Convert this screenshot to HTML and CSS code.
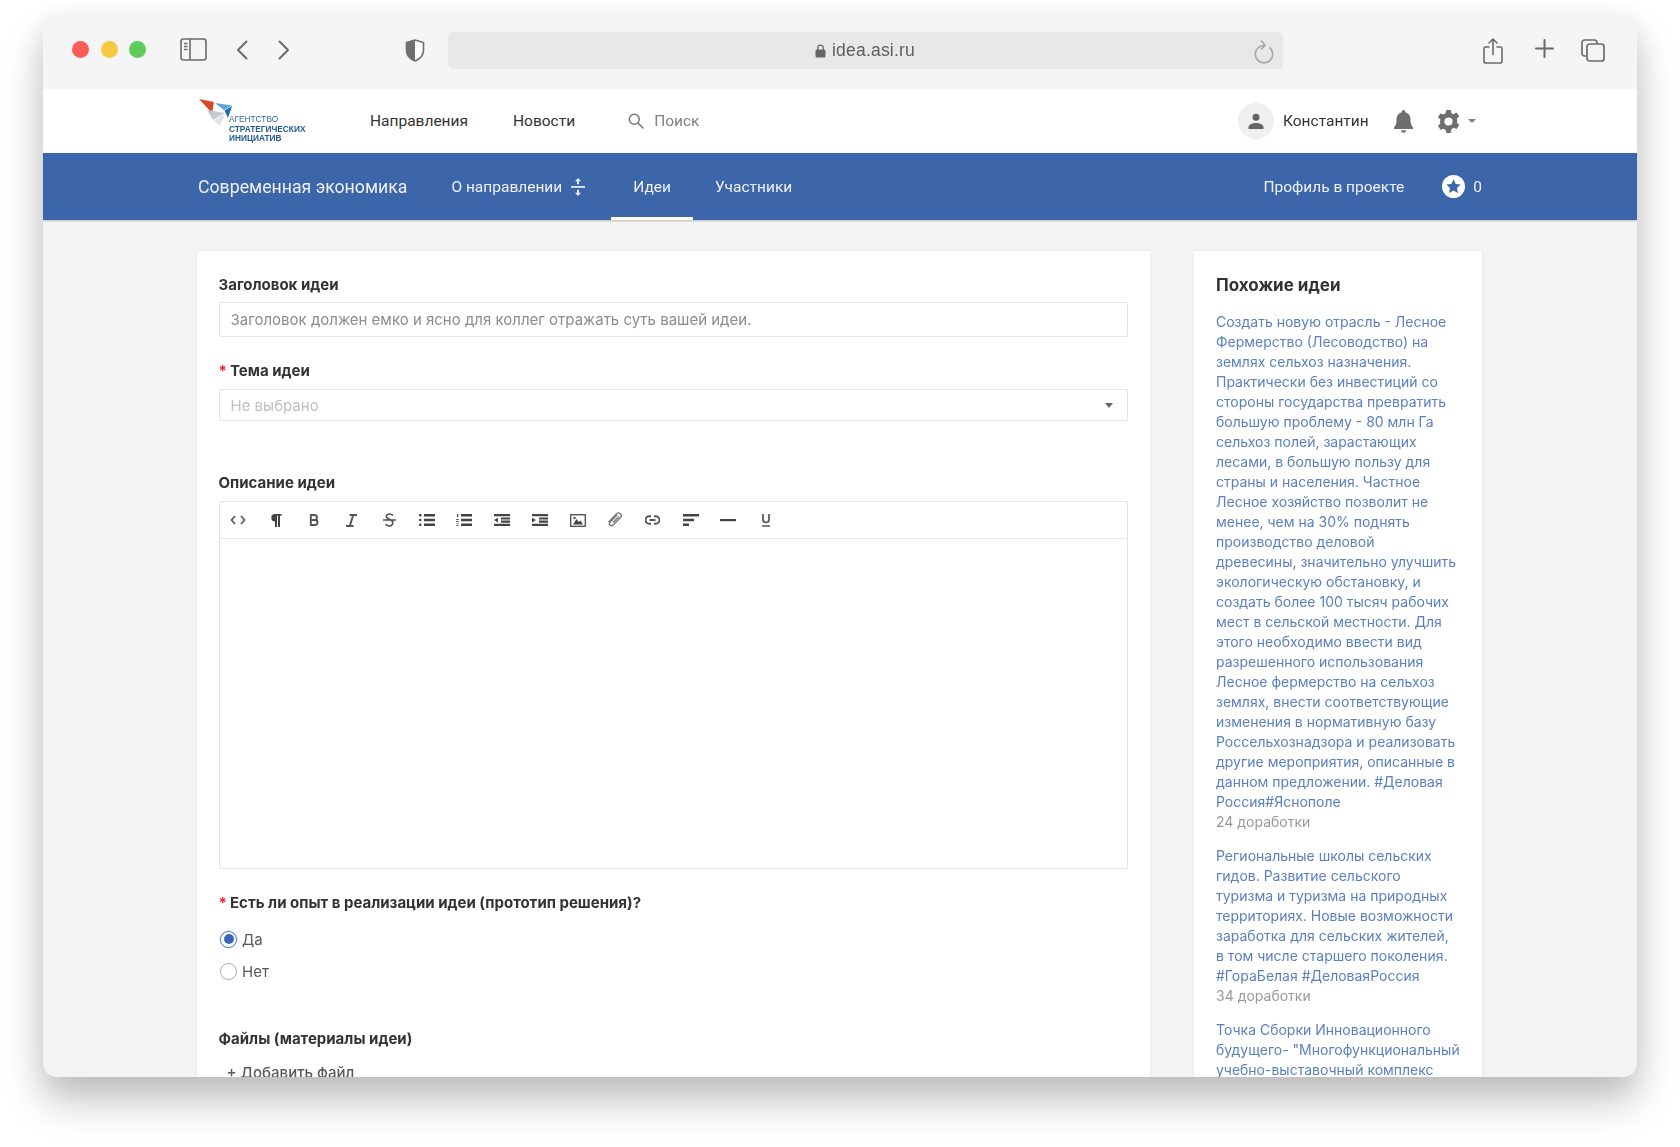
FILE: index.html
```html
<!DOCTYPE html>
<html lang="ru">
<head>
<meta charset="utf-8">
<title>idea.asi.ru</title>
<link rel="stylesheet" href="styles.css">
</head>
<body>
<div class="window">
  <header class="chrome">
    <div class="lights"><i class="light red"></i><i class="light yellow"></i><i class="light green"></i></div>
    <svg class="c-sidebar" width="27" height="23" viewBox="0 0 27 23" fill="none" stroke="#6b6b6b" stroke-width="1.6"><rect x="1" y="1" width="25" height="21" rx="2.5"/><path d="M10 1v21"/><path d="M4 5.500h3.500M4 8.500h3.500M4 11.500h3.500" stroke-width="1.300"/></svg>
    <svg class="c-back" width="12" height="20" viewBox="0 0 12 20" fill="none" stroke="#6b6b6b" stroke-width="2" stroke-linecap="round" stroke-linejoin="round"><path d="M10.500 1.500 2 10l8.500 8.500"/></svg>
    <svg class="c-forward" width="12" height="20" viewBox="0 0 12 20" fill="none" stroke="#6b6b6b" stroke-width="2" stroke-linecap="round" stroke-linejoin="round"><path d="M1.500 1.500 10 10l-8.500 8.500"/></svg>
    <svg class="c-shield" width="20" height="23" viewBox="0 0 20 23"><path d="M10 1 1.500 3.500V11c0 5 3.500 9 8.500 11 5-2 8.500-6 8.500-11V3.500z" fill="#fff" stroke="#6f6f6f" stroke-width="1.600"/><path d="M10 1 1.500 3.500V11c0 5 3.500 9 8.500 11z" fill="#6f6f6f"/></svg>
    <div class="url">
      <div class="url-text">
        <svg width="11" height="14" viewBox="0 0 11 14"><rect x="0.500" y="5.500" width="10" height="8" rx="1.500" fill="#666"/><path d="M2.800 6V3.800a2.700 2.700 0 0 1 5.400 0V6" fill="none" stroke="#666" stroke-width="1.300"/></svg>
        <span>idea.asi.ru</span>
      </div>
      <svg class="c-reload" width="21" height="24" viewBox="0 0 21 24" fill="none" stroke="#a6a6a6" stroke-width="1.600" stroke-linecap="round" stroke-linejoin="round"><path d="M11 5.500a8.700 8.700 0 1 0 8.700 8.700c0-2.600-1-4.700-2.800-6.300"/><path d="M8.500 1 12 5.200 8.500 9"/></svg>
    </div>
    <div class="chrome-right">
      <svg width="20" height="26" viewBox="0 0 20 26" fill="none" stroke="#6b6b6b" stroke-width="1.600" stroke-linecap="round" stroke-linejoin="round"><path d="M6 9H2.500A1.500 1.500 0 0 0 1 10.500v13A1.500 1.500 0 0 0 2.500 25h15a1.500 1.500 0 0 0 1.500-1.500v-13A1.500 1.500 0 0 0 17.500 9H14"/><path d="M10 16.500V1.500M6 5l4-4 4 4"/></svg>
      <svg width="19" height="19" viewBox="0 0 19 19" fill="none" stroke="#6b6b6b" stroke-width="2" stroke-linecap="round"><path d="M9.500 1v17M1 9.500h17"/></svg>
      <svg width="24" height="23" viewBox="0 0 24 23" fill="none" stroke="#6b6b6b" stroke-width="1.700"><path d="M5 17H3.500A2.500 2.500 0 0 1 1 14.500v-11A2.500 2.500 0 0 1 3.500 1h10A2.500 2.500 0 0 1 16 3.500V5"/><rect x="6" y="5" width="17" height="17" rx="2.500"/></svg>
    </div>
  </header>

  <div class="page">
    <nav class="topnav">
      <a class="logo">
        <svg class="logo-mark" width="36" height="30" viewBox="0 0 36 30"><path d="M0 0 15 3 13 14z" fill="#d9472b"/><path d="M16 4 33 6.500 25 11z" fill="#57a5dc"/><path d="M33 7 29 19 25.500 11.500z" fill="#1f6fb0"/><path d="M8 11 26 14 14 21z" fill="#c4c9ce"/><path d="M26 15 21 27 15 21.500z" fill="#dfe2e5"/></svg>
        <span class="logo-text"><span class="logo-thin">АГЕНТСТВО</span><b>СТРАТЕГИЧЕСКИХ</b><b>ИНИЦИАТИВ</b></span>
      </a>
      <a class="topnav-link first">Направления</a>
      <a class="topnav-link second">Новости</a>
      <div class="search">
        <svg width="16" height="16" viewBox="0 0 16 16" fill="none" stroke="#777" stroke-width="1.500" stroke-linecap="round"><circle cx="6.300" cy="6.300" r="5"/><path d="m10 10 5 5"/></svg>
        <span>Поиск</span>
      </div>
      <div class="user">
        <span class="avatar"><svg width="16" height="16" viewBox="0 0 16 16" fill="#666"><circle cx="8" cy="4.200" r="3.500"/><path d="M0.500 16v-1.500c0-3 3.500-4.500 7.500-4.500s7.500 1.500 7.500 4.500V16z"/></svg></span>
        <span class="user-name">Константин</span>
        <svg class="bell" width="19" height="23" viewBox="0 0 19 23" fill="#6e6e6e"><path d="M9.500 0a1.700 1.700 0 0 1 1.700 1.700v.6c3.300.8 5.300 3.700 5.300 7.200 0 4.800 1.100 6.200 2.500 8v1.500H0V17.500c1.400-1.800 2.500-3.200 2.500-8 0-3.500 2-6.400 5.300-7.200v-.6A1.700 1.700 0 0 1 9.500 0z"/><path d="M7 20.300h5a2.500 2.500 0 0 1-5 0z"/></svg>
        <svg class="gear" width="23" height="23" viewBox="0 0 24 24" fill="#6e6e6e"><path fill-rule="evenodd" d="M9.700 0h4.600l.7 3.300c.8.300 1.500.6 2.200 1.100l3-1.700 3 3.900-2.500 2.300c.2.700.3 1.400.3 2.100s-.1 1.400-.3 2.100l2.500 2.300-2.600 4.300-3.200-1.200c-.7.500-1.400.9-2.200 1.200L14.300 24H9.700L9 20.700c-.8-.3-1.500-.7-2.200-1.200l-3.200 1.200L1 16.400l2.500-2.300c-.2-.7-.3-1.400-.3-2.100s.1-1.400.3-2.100L1 7.600l2.600-3.900 3.200 1C7.500 4.200 8.200 3.800 9 3.500zM12 7.700a4.300 4.300 0 1 0 0 8.600 4.300 4.300 0 0 0 0-8.600z"/></svg>
        <i class="caret"></i>
      </div>
    </nav>

    <nav class="subnav">
      <span class="subnav-title">Современная экономика</span>
      <a class="subnav-link about">О направлении
        <svg width="14" height="18" viewBox="0 0 14 18" fill="#e4eaf4"><path d="M0 8h14v1.800H0z"/><path d="M7 0l3 3.200H8v3H6v-3H4zM7 18l3-3.200H8v-3H6v3H4z"/></svg>
      </a>
      <a class="subnav-tab active">Идеи</a>
      <a class="subnav-tab">Участники</a>
      <div class="subnav-right">
        <a class="subnav-link">Профиль в проекте</a>
        <svg class="star" width="23" height="23" viewBox="0 0 23 23"><circle cx="11.500" cy="11.500" r="11.500" fill="#fff"/><path d="m11.500 4.300 2.200 4.600 5 .6-3.700 3.400 1 5-4.500-2.500L7 18l1-5-3.700-3.400 5-.6z" fill="#3d65a9"/></svg>
        <span class="score">0</span>
      </div>
    </nav>

    <main class="content">
      <section class="card form">
        <div class="label">Заголовок идеи</div>
        <div class="input">Заголовок должен емко и ясно для коллег отражать суть вашей идеи.</div>

        <div class="label required theme-label"><em>*</em>Тема идеи</div>
        <div class="input select"><span>Не выбрано</span><i class="select-caret"></i></div>

        <div class="label desc-label">Описание идеи</div>
        <div class="editor">
          <div class="tools">
            <span class="tool"><svg width="16" height="12" viewBox="0 0 16 12" fill="none" stroke="#555" stroke-width="1.700"><path d="M5 2 1.500 6 5 10M11 2l3.500 4L11 10"/></svg></span>
            <span class="tool"><svg width="12" height="14" viewBox="0 0 12 14" fill="#444"><path d="M5 1h6.500v1.800H10V14H8V2.800H7V14H5V8.400A3.700 3.700 0 0 1 5 1z"/></svg></span>
            <span class="tool"><svg width="10" height="12" viewBox="0 0 10 12" fill="none" stroke="#555" stroke-width="1.900"><path d="M1.800 1v10M1 1h4.500a2.400 2.400 0 0 1 0 5H1.800h4.200a2.500 2.500 0 0 1 0 5H1"/></svg></span>
            <span class="tool"><svg width="11" height="13" viewBox="0 0 11 13" fill="none" stroke="#555" stroke-width="1.900"><path d="M3.500 1H11M0 12h7.500M7.200 1 3.800 12"/></svg></span>
            <span class="tool"><svg width="13" height="14" viewBox="0 0 13 14" fill="none" stroke="#555" stroke-width="1.700"><path d="M10 2.500C9 1.200 7.800 1 6.500 1 4.800 1 3.300 2 3.300 3.600c0 1.500 1.400 2.200 3.200 2.800 2 .7 3.300 1.500 3.300 3.300 0 1.800-1.600 3.300-3.500 3.300-1.500 0-2.800-.5-3.800-1.800M0 7h13"/></svg></span>
            <span class="tool"><svg width="16" height="12" viewBox="0 0 16 12" fill="#444"><path d="M5 0h11v2.400H5zM5 4.800h11v2.400H5zM5 9.600h11V12H5z"/><circle cx="1.300" cy="1.200" r="1.300"/><circle cx="1.300" cy="6" r="1.300"/><circle cx="1.300" cy="10.800" r="1.300"/></svg></span>
            <span class="tool"><svg width="16" height="12" viewBox="0 0 16 12" fill="#444"><path d="M5 0h11v2.400H5zM5 4.800h11v2.400H5zM5 9.600h11V12H5zM1 0h1.200v3H1zM.3 5h2.400v1H.3zM.3 7h2.400v1H.3zM.3 9.500h2.400v.8H.3zM.3 11.200h2.400v.8H.3z"/></svg></span>
            <span class="tool"><svg width="16" height="12" viewBox="0 0 16 12" fill="#444"><path d="M0 0h16v2.200H0zM7 3.400h9v2.200H7zM7 6.600h9v2.200H7zM0 9.800h16V12H0zM4 3.800v4.600L0 6.100z"/></svg></span>
            <span class="tool"><svg width="16" height="12" viewBox="0 0 16 12" fill="#444"><path d="M0 0h16v2.200H0zM7 3.400h9v2.200H7zM7 6.600h9v2.200H7zM0 9.800h16V12H0zM0 3.800v4.600l4-2.300z"/></svg></span>
            <span class="tool"><svg width="16" height="13" viewBox="0 0 16 13"><rect x=".7" y=".7" width="14.600" height="11.600" fill="none" stroke="#555" stroke-width="1.400"/><path d="M3 10.500 6.500 5l2.300 3 1.700-1.500 2.500 4z" fill="#444"/><circle cx="4.500" cy="4" r="1.200" fill="#444"/></svg></span>
            <span class="tool"><svg width="16" height="16" viewBox="0 0 16 16" fill="none" stroke="#7d7d7d" stroke-width="1.500" stroke-linecap="round"><path d="M9.600 3.500 3.200 10c-1 1-1 2.300-.2 3.100.8.800 2.200.8 3.100-.1l7.200-7.300c1.300-1.300 1.300-3 .3-4-1-1-2.800-1-4 .2L2 9.500M6.500 10l5-5"/></svg></span>
            <span class="tool"><svg width="15" height="10" viewBox="0 0 15 10" fill="none" stroke="#555" stroke-width="1.900"><path d="M6 1.200H4.300a3.800 3.800 0 0 0 0 7.600H6M9 1.200h1.700a3.800 3.800 0 0 1 0 7.600H9M4.500 5h6"/></svg></span>
            <span class="tool"><svg width="16" height="12" viewBox="0 0 16 12" fill="#444"><path d="M0 0h16v2.400H0zM0 4.800h11v2.400H0zM0 9.600h6V12H0z"/></svg></span>
            <span class="tool"><svg width="16" height="3" viewBox="0 0 16 3" fill="#444"><path d="M0 0h16v2.200H0z"/></svg></span>
            <span class="tool"><svg width="10" height="13" viewBox="0 0 10 13" fill="none" stroke="#555" stroke-width="1.700"><path d="M2 0v5.500a3 3 0 0 0 6 0V0M1 12h8"/></svg></span>
          </div>
          <div class="editor-body"></div>
        </div>

        <div class="label required question-label"><em>*</em>Есть ли опыт в реализации идеи (прототип решения)?</div>
        <label class="radio first-radio"><i class="dot checked"></i><span>Да</span></label>
        <label class="radio"><i class="dot"></i><span>Нет</span></label>

        <div class="label files-label">Файлы (материалы идеи)</div>
        <div class="add-file">+ Добавить файл</div>
      </section>

      <aside class="card side">
        <h3>Похожие идеи</h3>
        <div class="idea">
          <a>Создать новую отрасль - Лесное Фермерство (Лесоводство) на землях сельхоз назначения. Практически без инвестиций со стороны государства превратить большую проблему - 80 млн Га сельхоз полей, зарастающих лесами, в большую пользу для страны и населения. Частное Лесное хозяйство позволит не менее, чем на 30% поднять производство деловой<br>древесины, значительно улучшить экологическую обстановку, и создать более 100 тысяч рабочих мест в сельской местности. Для этого необходимо ввести вид разрешенного использования Лесное фермерство на сельхоз землях, внести соответствующие изменения в нормативную базу Россельхознадзора и реализовать другие мероприятия, описанные в данном предложении. #Деловая Россия#Яснополе</a>
          <span>24 доработки</span>
        </div>
        <div class="idea">
          <a>Региональные школы сельских гидов. Развитие сельского<br>туризма и туризма на природных территориях. Новые возможности заработка для сельских жителей,<br>в том числе старшего поколения. #ГораБелая #ДеловаяРоссия</a>
          <span>34 доработки</span>
        </div>
        <div class="idea">
          <a>Точка Сборки Инновационного будущего- "Многофункциональный учебно-выставочный комплекс</a>
        </div>
      </aside>
    </main>
  </div>
</div>
</body>
</html>
```
FILE: styles.css
```css
* { box-sizing: border-box; }
html, body { margin: 0; height: 100%; background: #fff; overflow: hidden; }
body { padding: 15px 43px 0; font-family: Inter, "Liberation Sans", sans-serif; }
svg { display: block; flex: none; }
a { color: inherit; text-decoration: none; }

.window {
  width: 1594px; height: 1062px; display: flex; flex-direction: column; overflow: visible;
  border-radius: 14px; background: #f4f4f4;
  box-shadow: 0 24px 40px rgba(0,0,0,.24), 0 6px 30px rgba(0,0,0,.06);
}
.chrome {
  height: 74px; flex: none; display: flex; align-items: center; padding-left: 29px;
  background: #f5f5f5; border-radius: 14px 14px 0 0; filter: blur(.6px);
}
.lights { display: flex; gap: 11.500px; margin-top: -6px; }
.light { display: block; width: 17px; height: 17px; border-radius: 50%; }
.red { background: #fc5e57; }
.yellow { background: #f8c840; }
.green { background: #5dcc5c; }
.c-sidebar { margin: -5px 0 0 33.500px; }
.c-back { margin: -5px 0 0 29px; }
.c-forward { margin: -5px 0 0 30px; }
.c-shield { margin: -3px 0 0 115px; }
.url {
  width: 835px; height: 37px; margin: -3px 0 0 23px; border-radius: 5px; background: #e8e8e8;
  display: flex; align-items: center; position: relative;
}
.url-text {
  flex: 1; display: flex; align-items: center; justify-content: center; gap: 6px;
  font: 17.500px "Liberation Sans", sans-serif; color: #5e5e5e; letter-spacing: .2px;
}
.c-reload { position: absolute; right: 9px; top: 8px; }
.chrome-right { display: flex; align-items: flex-start; gap: 32px; margin: -2px 0 0 200px; height: 26px; }
.chrome-right svg:nth-child(2) { margin-top: 1px; }
.chrome-right svg:nth-child(3) { margin-left: -5px; margin-top: 1px; }

.page { flex: 1; min-height: 0; display: flex; flex-direction: column; overflow: hidden; border-radius: 0 0 14px 14px; filter: blur(.6px); }
.topnav {
  height: 64px; flex: none; background: #fff; display: flex; align-items: center; padding-left: 156px;
  font-family: Roboto, sans-serif; font-size: 15.500px; color: #333;
}
.logo { width: 106px; height: 44px; position: relative; display: block; }
.logo-mark { position: absolute; left: 0; top: 0; }
.logo-text {
  position: absolute; left: 30px; top: 16px; display: flex; flex-direction: column;
  font: 8.300px/9.500px "Liberation Sans", sans-serif; color: #1f5a94; white-space: nowrap;
}
.logo-thin { color: #2e6aa5; }
.topnav-link.first { margin-left: 65px; }
.topnav-link.second { margin-left: 45px; }
.search { display: flex; align-items: center; gap: 10px; margin-left: 53px; color: #808080; }
.user { margin-left: auto; display: flex; align-items: center; padding-right: 161px; }
.avatar { width: 36px; height: 36px; border-radius: 50%; background: #efefef; display: flex; align-items: center; justify-content: center; }
.user-name { margin-left: 9px; width: 85px; }
.bell { margin-left: 26px; }
.gear { margin-left: 24px; }
.caret { display: block; margin-left: 8px; border: 4px solid transparent; border-top: 4px solid #808080; border-bottom: 0; }

.subnav {
  height: 67px; flex: none; background: #3d65a9; color: #eef2f8; display: flex; align-items: center; padding: 0 155px;
  font-family: Roboto, sans-serif; font-size: 15.500px; box-shadow: 0 1px 2px rgba(0,0,0,.25);
  position: relative;
}
.subnav-title { font-size: 17.700px; }
.subnav-link { display: flex; align-items: center; }
.about { margin-left: 44px; gap: 9px; }
.subnav-tab { height: 67px; display: flex; align-items: center; padding: 0 22px; }
.about + .subnav-tab { margin-left: 26px; }
.subnav-tab.active { box-shadow: inset 0 -3px 0 #fff; }
.subnav-right { margin-left: auto; display: flex; align-items: center; }
.star { margin-left: 38px; }
.score { margin-left: 8px; }

.content { flex: 1; min-height: 0; display: flex; gap: 44px; padding: 31px 0 0 154px; overflow: hidden; }
.card { background: #fff; box-shadow: 0 0 4px rgba(0,0,0,.07); border-radius: 2px; flex: none; height: 1200px; }
.form { width: 953px; padding: 24px 22px 0 21.500px; }
.label { font-size: 15px; line-height: 20px; font-weight: 700; color: #333; }
.label em { font-style: normal; color: #f5222d; display: inline-block; width: 11.500px; }
.input {
  height: 35px; margin-top: 7px; border: 1px solid #e4e4e4; border-radius: 2px; padding-left: 11px;
  display: flex; align-items: center; font-size: 15px; color: #8c8c8c;
}
.theme-label { margin-top: 24px; }
.select { height: 32px; margin-top: 8px; color: #c0c0c0; justify-content: space-between; padding-right: 14px; }
.select-caret { border: 4.500px solid transparent; border-top: 5px solid #666; border-bottom: 0; display: block; }
.desc-label { margin-top: 52px; }
.editor { height: 368px; margin-top: 8px; border: 1px solid #e4e4e4; border-radius: 2px; display: flex; flex-direction: column; }
.tools { height: 37px; flex: none; display: flex; align-items: center; border-bottom: 1px solid #e8e8e8; }
.tool { width: 37.700px; display: flex; align-items: center; justify-content: center; }
.question-label { margin-top: 24px; }
.radio { display: flex; align-items: center; height: 24px; margin-top: 8px; font-size: 15px; color: #595959; }
.first-radio { margin-top: 14px; }
.dot { display: block; width: 17px; height: 17px; margin: 0 5px 0 1.500px; border-radius: 50%; border: 1.500px solid #a8a8a8; position: relative; }
.dot.checked { border-color: #4a76c4; box-shadow: 0 0 0 1px rgba(74,118,196,.15); }
.dot.checked::after { content: ""; position: absolute; inset: 2.500px; border-radius: 50%; background: #3d65b5; }
.files-label { margin-top: 46px; }
.add-file { margin: 14px 0 0 8px; font-size: 15px; line-height: 20px; color: #595959; font-weight: 500; }

.side { width: 288px; padding: 24px 18px 0 22px; }
.side h3 { margin: 0 0 17px; font-size: 17px; line-height: 20px; font-weight: 700; color: #333; }
.idea { margin-bottom: 14px; font-size: 14px; line-height: 20px; }
.idea a { display: block; color: #5b80bf; }
.idea span { display: block; color: #999; }
```
